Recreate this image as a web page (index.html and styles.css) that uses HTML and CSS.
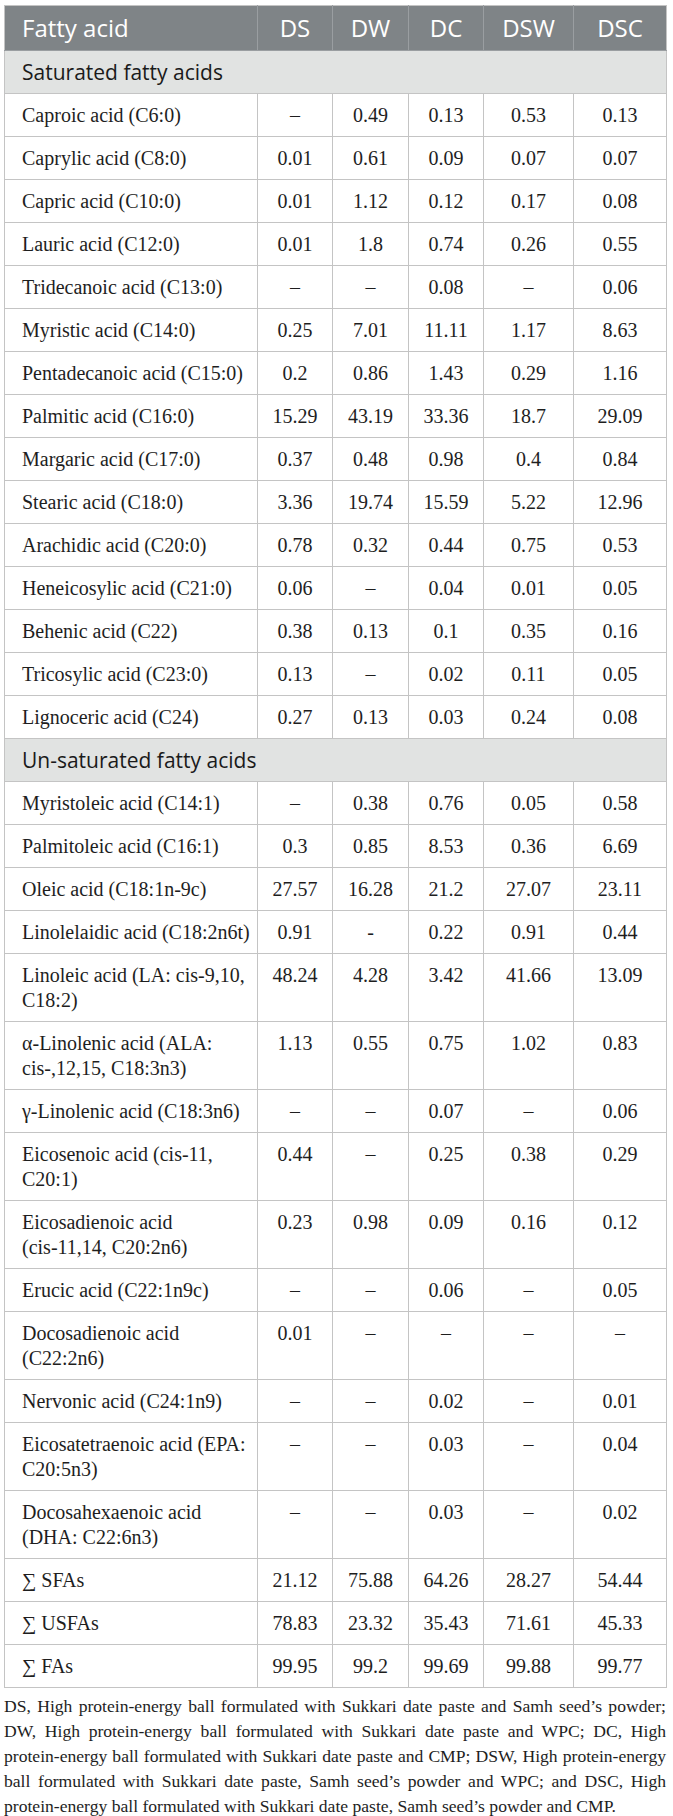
FILE: index.html
```html
<!DOCTYPE html>
<html lang="en">
<head>
<meta charset="utf-8">
<title>Fatty acid composition</title>
<link rel="stylesheet" href="styles.css">
</head>
<body>
<div class="page">
<table class="fa-table">
  <colgroup>
    <col class="c-name"><col class="c-ds"><col class="c-dw"><col class="c-dc"><col class="c-dsw"><col class="c-dsc">
  </colgroup>
  <thead>
    <tr><th class="name">Fatty acid</th><th>DS</th><th>DW</th><th>DC</th><th>DSW</th><th>DSC</th></tr>
  </thead>
  <tbody>
    <tr class="section"><td colspan="6">Saturated fatty acids</td></tr>
    <tr><td class="name">Caproic acid (C6:0)</td><td>–</td><td>0.49</td><td>0.13</td><td>0.53</td><td>0.13</td></tr>
    <tr><td class="name">Caprylic acid (C8:0)</td><td>0.01</td><td>0.61</td><td>0.09</td><td>0.07</td><td>0.07</td></tr>
    <tr><td class="name">Capric acid (C10:0)</td><td>0.01</td><td>1.12</td><td>0.12</td><td>0.17</td><td>0.08</td></tr>
    <tr><td class="name">Lauric acid (C12:0)</td><td>0.01</td><td>1.8</td><td>0.74</td><td>0.26</td><td>0.55</td></tr>
    <tr><td class="name">Tridecanoic acid (C13:0)</td><td>–</td><td>–</td><td>0.08</td><td>–</td><td>0.06</td></tr>
    <tr><td class="name">Myristic acid (C14:0)</td><td>0.25</td><td>7.01</td><td>11.11</td><td>1.17</td><td>8.63</td></tr>
    <tr><td class="name">Pentadecanoic acid (C15:0)</td><td>0.2</td><td>0.86</td><td>1.43</td><td>0.29</td><td>1.16</td></tr>
    <tr><td class="name">Palmitic acid (C16:0)</td><td>15.29</td><td>43.19</td><td>33.36</td><td>18.7</td><td>29.09</td></tr>
    <tr><td class="name">Margaric acid (C17:0)</td><td>0.37</td><td>0.48</td><td>0.98</td><td>0.4</td><td>0.84</td></tr>
    <tr><td class="name">Stearic acid (C18:0)</td><td>3.36</td><td>19.74</td><td>15.59</td><td>5.22</td><td>12.96</td></tr>
    <tr><td class="name">Arachidic acid (C20:0)</td><td>0.78</td><td>0.32</td><td>0.44</td><td>0.75</td><td>0.53</td></tr>
    <tr><td class="name">Heneicosylic acid (C21:0)</td><td>0.06</td><td>–</td><td>0.04</td><td>0.01</td><td>0.05</td></tr>
    <tr><td class="name">Behenic acid (C22)</td><td>0.38</td><td>0.13</td><td>0.1</td><td>0.35</td><td>0.16</td></tr>
    <tr><td class="name">Tricosylic acid (C23:0)</td><td>0.13</td><td>–</td><td>0.02</td><td>0.11</td><td>0.05</td></tr>
    <tr><td class="name">Lignoceric acid (C24)</td><td>0.27</td><td>0.13</td><td>0.03</td><td>0.24</td><td>0.08</td></tr>
    <tr class="section"><td colspan="6">Un-saturated fatty acids</td></tr>
    <tr><td class="name">Myristoleic acid (C14:1)</td><td>–</td><td>0.38</td><td>0.76</td><td>0.05</td><td>0.58</td></tr>
    <tr><td class="name">Palmitoleic acid (C16:1)</td><td>0.3</td><td>0.85</td><td>8.53</td><td>0.36</td><td>6.69</td></tr>
    <tr><td class="name">Oleic acid (C18:1n-9c)</td><td>27.57</td><td>16.28</td><td>21.2</td><td>27.07</td><td>23.11</td></tr>
    <tr><td class="name"><span class="nw">Linolelaidic acid (C18:2n6t)</span></td><td>0.91</td><td>-</td><td>0.22</td><td>0.91</td><td>0.44</td></tr>
    <tr><td class="name">Linoleic acid (LA: <span class="nw">cis-9,10,</span> C18:2)</td><td>48.24</td><td>4.28</td><td>3.42</td><td>41.66</td><td>13.09</td></tr>
    <tr><td class="name">α-Linolenic acid (ALA: <span class="nw">cis-,12,15,</span> C18:3n3)</td><td>1.13</td><td>0.55</td><td>0.75</td><td>1.02</td><td>0.83</td></tr>
    <tr><td class="name">γ-Linolenic acid (C18:3n6)</td><td>–</td><td>–</td><td>0.07</td><td>–</td><td>0.06</td></tr>
    <tr><td class="name">Eicosenoic acid <span class="nw">(cis-11,</span> C20:1)</td><td>0.44</td><td>–</td><td>0.25</td><td>0.38</td><td>0.29</td></tr>
    <tr><td class="name">Eicosadienoic acid <span class="nw">(cis-11,14,</span> C20:2n6)</td><td>0.23</td><td>0.98</td><td>0.09</td><td>0.16</td><td>0.12</td></tr>
    <tr><td class="name">Erucic acid (C22:1n9c)</td><td>–</td><td>–</td><td>0.06</td><td>–</td><td>0.05</td></tr>
    <tr><td class="name">Docosadienoic acid (C22:2n6)</td><td>0.01</td><td>–</td><td>–</td><td>–</td><td>–</td></tr>
    <tr><td class="name">Nervonic acid (C24:1n9)</td><td>–</td><td>–</td><td>0.02</td><td>–</td><td>0.01</td></tr>
    <tr><td class="name">Eicosatetraenoic acid (EPA: C20:5n3)</td><td>–</td><td>–</td><td>0.03</td><td>–</td><td>0.04</td></tr>
    <tr><td class="name">Docosahexaenoic acid (DHA: C22:6n3)</td><td>–</td><td>–</td><td>0.03</td><td>–</td><td>0.02</td></tr>
    <tr><td class="name">∑ SFAs</td><td>21.12</td><td>75.88</td><td>64.26</td><td>28.27</td><td>54.44</td></tr>
    <tr><td class="name">∑ USFAs</td><td>78.83</td><td>23.32</td><td>35.43</td><td>71.61</td><td>45.33</td></tr>
    <tr><td class="name">∑ FAs</td><td>99.95</td><td>99.2</td><td>99.69</td><td>99.88</td><td>99.77</td></tr>
  </tbody>
</table>
<p class="footnote">DS, High protein-energy ball formulated with Sukkari date paste and Samh seed’s powder; DW, High protein-energy ball formulated with Sukkari date paste and WPC; DC, High protein-energy ball formulated with Sukkari date paste and CMP; DSW, High protein-energy ball formulated with Sukkari date paste, Samh seed’s powder and WPC; and DSC, High protein-energy ball formulated with Sukkari date paste, Samh seed’s powder and CMP.</p>
</div>
</body>
</html>
```

FILE: styles.css
```css
html, body {
  margin: 0;
  padding: 0;
  background: #ffffff;
}

.page {
  padding: 5px 7px 0 4px;
  width: 662px;
}

.fa-table {
  width: 662px;
  table-layout: fixed;
  border-collapse: collapse;
  font-family: "Liberation Serif", "DejaVu Serif", serif;
  font-size: 20px;
  line-height: 25px;
  color: #1e1e1e;
}

.c-name { width: 253px; }
.c-ds { width: 75px; }
.c-dw { width: 76px; }
.c-dc { width: 75px; }
.c-dsw { width: 90px; }
.c-dsc { width: 93px; }

.fa-table th,
.fa-table td {
  border: 1px solid #c4c4c4;
  text-align: center;
  vertical-align: top;
  padding: 9px 4px 8px;
}

.fa-table thead th {
  background: #7f8487;
  color: #ffffff;
  font-family: "Open Sans", "Noto Sans", sans-serif;
  font-weight: 400;
  font-size: 24px;
  line-height: 26px;
  padding: 9px 4px;
  border-color: #9a9ea1;
  border-top-color: #c4c4c4;
  vertical-align: middle;
}

.fa-table thead th:first-child { border-left-color: #c4c4c4; }
.fa-table thead th:last-child { border-right-color: #c4c4c4; }

.fa-table .name {
  text-align: left;
  padding-left: 17px;
  padding-right: 4px;
}

.nw { white-space: nowrap; }

.fa-table .section td {
  background: #e1e3e2;
  font-family: "Open Sans", "Noto Sans", sans-serif;
  font-size: 21px;
  line-height: 25px;
  color: #1a1a1a;
  text-align: left;
  padding: 9px 17px 8px;
}

.footnote {
  margin: 6px 0 0 0;
  font-family: "Liberation Serif", "DejaVu Serif", serif;
  font-size: 17.6px;
  line-height: 25px;
  color: #1e1e1e;
  text-align: justify;
}
```
